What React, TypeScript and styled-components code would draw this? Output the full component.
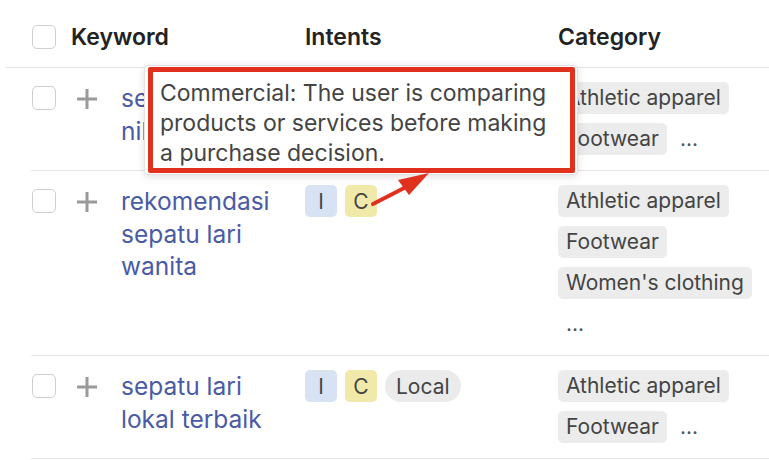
import React from "react";
import styled, { createGlobalStyle } from "styled-components";

const Global = createGlobalStyle`
  html, body {
    margin: 0;
    padding: 0;
    background: #ffffff;
    font-family: Inter, "Noto Sans", sans-serif;
    color: #333;
  }
`;

const Table = styled.div`
  position: relative;
  width: 769px;
  height: 460px;
  overflow: hidden;
`;

const Header = styled.div`
  display: grid;
  grid-template-columns: 39px 234px 253px 1fr;
  align-items: center;
  height: 68px;
  box-sizing: border-box;
  padding-top: 6px;
  margin-left: 5px;
  padding-left: 27px;
  border-bottom: 1px solid #e6e6e6;
`;

const HeadText = styled.div`
  font-size: 23px;
  font-weight: 600;
  color: #222;
`;

const Row = styled.div`
  display: grid;
  grid-template-columns: 44px 45px 184px 253px 1fr;
  align-items: start;
  margin-left: 31px;
  padding: 14px 0 15px 1px;
  border-bottom: 1px solid #e6e6e6;
`;

const Check = styled.span<{ $top?: number }>`
  display: block;
  width: 22px;
  height: 22px;
  margin-top: ${(p) => p.$top ?? 4}px;
  border: 1px solid #cfcfcf;
  border-radius: 5px;
  background: #fff;
`;

const PlusCell = styled.div`
  padding-top: 6px;
  color: #9a9a9a;
  display: flex;
`;

const Keyword = styled.div`
  font-size: 24.5px;
  line-height: 32.5px;
  color: #4a5ba6;
  padding-right: 14px;
`;

const Intents = styled.div`
  display: flex;
  gap: 8px;
  align-items: center;
`;

const Badge = styled.span<{ $bg: string; $pill?: boolean }>`
  display: inline-flex;
  align-items: center;
  justify-content: center;
  min-width: 32px;
  height: 32px;
  padding: 0 ${(p) => (p.$pill ? "11px" : "0")};
  box-sizing: border-box;
  border-radius: ${(p) => (p.$pill ? "16px" : "5px")};
  background: ${(p) => p.$bg};
  font-size: 21px;
  color: #444;
`;

const Categories = styled.div`
  display: flex;
  flex-wrap: wrap;
  row-gap: 9px;
  column-gap: 5px;
  align-items: center;
`;

const Chip = styled.span`
  display: inline-block;
  height: 32px;
  line-height: 32px;
  padding: 0 8px;
  border-radius: 5px;
  background: #ececec;
  font-size: 21px;
  color: #444;
  white-space: nowrap;
`;

const More = styled.span`
  display: inline-block;
  height: 32px;
  line-height: 32px;
  padding: 0 8px;
  font-size: 21px;
  color: #555;
`;

const Tooltip = styled.div`
  position: absolute;
  left: 144px;
  top: 65px;
  width: 434px;
  height: 110px;
  box-sizing: border-box;
  padding: 12px 22px 12px 15px;
  background: #fff;
  border: 1px solid #e2e2e2;
  border-radius: 4px;
  box-shadow: 0 2px 8px rgba(0, 0, 0, 0.12);
  font-size: 23px;
  line-height: 30px;
  color: #444;
`;

const Annotation = styled.div`
  position: absolute;
  left: 148px;
  top: 67px;
  width: 427px;
  height: 106px;
  box-sizing: border-box;
  border: 5px solid #e0301e;
  border-radius: 2px;
  pointer-events: none;
`;

const Arrow = styled.svg`
  position: absolute;
  left: 360px;
  top: 160px;
  pointer-events: none;
`;

const Plus = () => (
  <svg width="22" height="22" viewBox="0 0 22 22">
    <path d="M11 1v20M1 11h20" stroke="currentColor" strokeWidth="3" />
  </svg>
);

type Item = {
  keyword: string;
  intents: { label: string; bg: string; pill?: boolean }[];
  categories: string[];
};

const I = { label: "I", bg: "#d7e3f3" };
const C = { label: "C", bg: "#f1e9a9" };

const rows: Item[] = [
  { keyword: "sepatu lari nike", intents: [I, C], categories: ["Athletic apparel", "Footwear"] },
  { keyword: "rekomendasi sepatu lari wanita", intents: [I, C], categories: ["Athletic apparel", "Footwear", "Women's clothing"] },
  {
    keyword: "sepatu lari lokal terbaik",
    intents: [I, C, { label: "Local", bg: "#ebebeb", pill: true }],
    categories: ["Athletic apparel", "Footwear"],
  },
];

export default function App() {
  return (
    <Table>
      <Global />
      <Header>
        <Check $top={0} />
        <HeadText>Keyword</HeadText>
        <HeadText>Intents</HeadText>
        <HeadText>Category</HeadText>
      </Header>

      {rows.map((row) => (
        <Row key={row.keyword}>
          <Check />
          <PlusCell>
            <Plus />
          </PlusCell>
          <Keyword>{row.keyword}</Keyword>
          <Intents>
            {row.intents.map((b) => (
              <Badge key={b.label} $bg={b.bg} $pill={b.pill}>
                {b.label}
              </Badge>
            ))}
          </Intents>
          <Categories>
            {row.categories.map((c) => (
              <Chip key={c}>{c}</Chip>
            ))}
            <More>...</More>
          </Categories>
        </Row>
      ))}

      {/* tooltip for the C badge of the second row */}
      <Tooltip>Commercial: The user is comparing products or services before making a purchase decision.</Tooltip>
      <Annotation />
      <Arrow width="80" height="60" viewBox="0 0 80 60">
        <path d="M13 44L50 25" stroke="#e0301e" strokeWidth="4" strokeLinecap="round" />
        <path d="M69 13L38 20L49 35Z" fill="#e0301e" />
      </Arrow>
    </Table>
  );
}
